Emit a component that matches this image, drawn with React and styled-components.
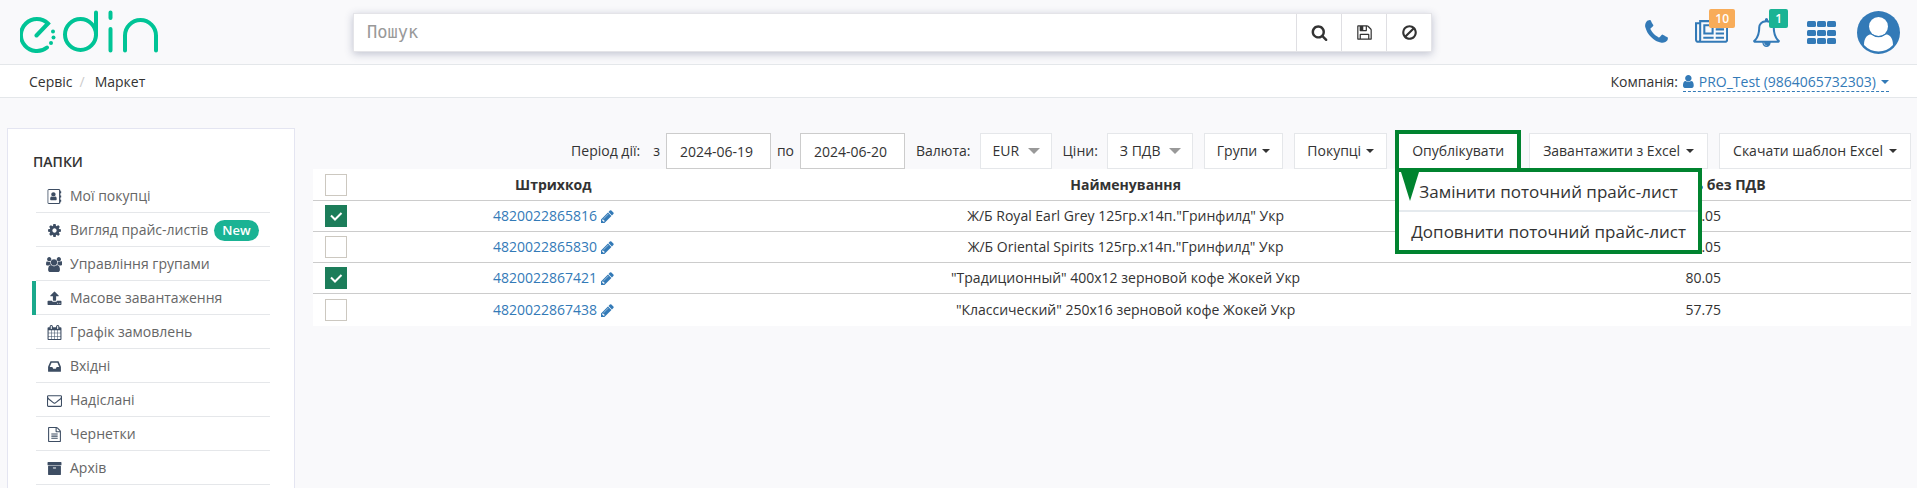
import React from "react";
import styled, { createGlobalStyle, css } from "styled-components";

const GlobalStyle = createGlobalStyle`
  *, *::before, *::after { box-sizing: border-box; }
  html, body, #root { min-height: 100vh; }
  body {
    margin: 0;
    background: #f9f9fb;
    color: #333;
    font: 14px/20px "Open Sans", "Noto Sans", sans-serif;
  }
  button, input, select { font: inherit; color: inherit; }
  a { color: #337ab7; text-decoration: none; }
`;

/* Icon outlines on a 1792-unit em: glyph width, path, left edge. */
const ICONS = {
  search: [1792, "M1216 832q0-185-131.5-316.5t-316.5-131.5-316.5 131.5-131.5 316.5 131.5 316.5 316.5 131.5 316.5-131.5 131.5-316.5zm512 832q0 52-38 90t-90 38q-54 0-90-38l-343-342q-179 124-399 124-143 0-273.5-55.5t-225-150-150-225-55.5-273.5 55.5-273.5 150-225 225-150 273.5-55.5 273.5 55.5 225 150 150 225 55.5 273.5q0 220-124 399l343 343q37 37 37 90z"],
  save: [1792, "M512 1536h768v-384h-768v384zm896 0h128v-896q0-14-10-38.5t-20-34.5l-281-281q-10-10-34-20t-39-10v416q0 40-28 68t-68 28h-576q-40 0-68-28t-28-68v-416h-128v1280h128v-416q0-40 28-68t68-28h832q40 0 68 28t28 68v416zm-384-928v-320q0-13-9.5-22.5t-22.5-9.5h-192q-13 0-22.5 9.5t-9.5 22.5v320q0 13 9.5 22.5t22.5 9.5h192q13 0 22.5-9.5t9.5-22.5zm640 32v928q0 40-28 68t-68 28h-1344q-40 0-68-28t-28-68v-1344q0-40 28-68t68-28h928q40 0 88 20t76 48l280 280q28 28 48 76t20 88z"],
  ban: [1792, "M1440 893q0-161-87-295l-754 753q137 89 297 89 111 0 211.5-43.5t173.5-116.5 116-174.5 43-212.5zm-999 299l755-754q-135-91-300-91-148 0-273 73t-198 199-73 274q0 162 89 299zm1223-299q0 157-61 300t-163.5 246-245 164-298.5 61-298.5-61-245-164-163.5-246-61-300 61-299.5 163.5-245.5 245-164 298.5-61 298.5 61 245 164 163.5 245.5 61 299.5z"],
  phone: [1792, "M1600 1240q0 27-10 70.5t-21 68.5q-21 50-122 106-94 51-186 51-27 0-53-3.5t-57.5-12.5-47-14.5-55.5-20.5-49-18q-98-35-175-83-127-79-264-216t-216-264q-48-77-83-175-3-9-18-49t-20.5-55.5-14.5-47-12.5-57.5-3.5-53q0-92 51-186 56-101 106-122 25-11 68.5-21t70.5-10q14 0 21 3 18 6 53 76 11 19 30 54t35 63.5 31 53.5q3 4 17.5 25t21.5 35.5 7 28.5q0 20-28.5 50t-62 55-62 53-28.5 46q0 9 5 22.5t8.5 20.5 14 24 11.5 19q76 137 174 235t235 174q2 1 19 11.5t24 14 20.5 8.5 22.5 5q18 0 46-28.5t53-62 55-62 50-28.5q14 0 28.5 7t35.5 21.5 25 17.5q25 15 53.5 31t63.5 35 54 30q70 35 76 53 3 7 3 21z"],
  news: [2048, "M1024 512h-384v384h384v-384zm128 640v128h-640v-128h640zm0-768v640h-640v-640h640zm640 768v128h-512v-128h512zm0-256v128h-512v-128h512zm0-256v128h-512v-128h512zm0-256v128h-512v-128h512zm-1536 960v-960h-128v960q0 26 19 45t45 19 45-19 19-45zm1664 0v-1088h-1536v1088q0 33-11 64h1483q26 0 45-19t19-45zm128-1216v1216q0 80-56 136t-136 56h-1664q-80 0-136-56t-56-136v-1088h256v-128h1792z"],
  bell: [1792, "M912 1696q0-16-16-16-59 0-101.5-42.5t-42.5-101.5q0-16-16-16t-16 16q0 73 51.5 124.5t124.5 51.5q16 0 16-16zm-666-288h1300q-266-300-266-832 0-51-24-105t-69-103-121.5-80.5-169.5-31.5-169.5 31.5-121.5 80.5-69 103-24 105q0 532-266 832zm1482 0q0 52-38 90t-90 38h-448q0 106-75 181t-181 75-181-75-75-181h-448q-52 0-90-38t-38-90q50-42 91-88t85-119.5 74.5-158.5 50-206 19.5-260q0-152 117-282.5t307-158.5q-8-19-8-39 0-40 28-68t68-28 68 28 28 68q0 20-8 39 190 28 307 158.5t117 282.5q0 139 19.5 260t50 206 74.5 158.5 85 119.5 91 88z"],
  user: [1280, "M1536 1399q0 109-62.5 187t-150.5 78h-854q-88 0-150.5-78t-62.5-187q0-85 8.5-160.5t31.5-152 58.5-131 94-89 134.5-34.5q131 128 313 128t313-128q76 0 134.5 34.5t94 89 58.5 131 31.5 152 8.5 160.5zm-256-887q0 159-112.5 271.5t-271.5 112.5-271.5-112.5-112.5-271.5 112.5-271.5 271.5-112.5 271.5 112.5 112.5 271.5z", 256],
  addressBook: [1792, "M1028 644q0 107-76.5 183t-183.5 76-183.500-76-76.500-183 76.500-183.500 183.500-76.500 183.500 76.500 76.500 183.500zm-520 700q-60 0-94-38t-34-92q0-52 5-104t22-106 52-86 84-32q100 84 225 84t225-84q49 0 84 32t52 86 22 106 5 104q0 54-34 92t-94 38zM1664 512h-64v256h64q13 0 22.500 9.500t9.500 22.500v192q0 13-9.500 22.500t-22.500 9.500h-64v256h64q13 0 22.500 9.500t9.500 22.500v192q0 13-9.500 22.500t-22.500 9.500h-64v96q0 66-47 113t-113 47h-1216q-66 0-113-47t-47-113v-1472q0-66 47-113t113-47h1216q66 0 113 47t47 113v96h64q13 0 22.500 9.500t9.500 22.500v192q0 13-9.500 22.500t-22.500 9.500zM1440 1632v-1472q0-13-9.500-22.500t-22.500-9.500h-1216q-13 0-22.500 9.500t-9.500 22.500v1472q0 13 9.500 22.500t22.500 9.500h1216q13 0 22.500-9.500t9.500-22.500z"],
  cog: [1792, "M1152 896q0-106-75-181t-181-75-181 75-75 181 75 181 181 75 181-75 75-181zm512-109v222q0 12-8 23t-20 13l-185 28q-19 54-39 91 35 50 107 138 10 12 10 25t-9 23q-27 37-99 108t-94 71q-12 0-26-9l-138-108q-44 23-91 38-16 136-29 186-7 28-36 28h-222q-14 0-24.5-8.5t-11.5-21.5l-28-184q-49-16-90-37l-141 107q-10 9-25 9-14 0-25-11-126-114-165-168-7-10-7-23 0-12 8-23 15-21 51-66.500t54-70.500q-27-50-41-99l-183-27q-13-2-21-12.500t-8-23.500v-222q0-12 8-23t19-13l186-28q14-46 39-92-40-57-107-138-10-12-10-24 0-10 9-23 26-36 98.500-107.500t94.500-71.500q13 0 26 10l138 107q44-23 91-38 16-136 29-186 7-28 36-28h222q14 0 24.500 8.500t11.500 21.500l28 184q49 16 90 37l142-107q9-9 24-9 13 0 25 10 129 119 165 170 7 8 7 22 0 12-8 23-15 21-51 66.500t-54 70.500q26 50 41 98l183 28q13 2 21 12.500t8 23.500z"],
  users: [1920, "M593 896q-162 5-265 128h-134q-82 0-138-40.5t-56-118.5q0-353 124-353 6 0 43.5 21t97.5 42.5 119 21.5q67 0 133-23-5 37-5 66 0 159 93 293zm1071 637q0 120-73 189.500t-194 69.500h-874q-121 0-194-69.500t-73-189.500q0-53 3.500-103.500t14-109 26.500-108.500 43-97.500 62-81 85.500-53.500 111.500-20q10 0 43 21.500t73 48 107 48 135 21.500 135-21.500 107-48 73-48 43-21.500q61 0 111.500 20t85.500 53.500 62 81 43 97.500 26.500 108.500 14 109 3.500 103.500zm-1024-1277q0 106-75 181t-181 75-181-75-75-181 75-181 181-75 181 75 75 181zm704 384q0 159-112.500 271.500t-271.500 112.500-271.500-112.500-112.500-271.500 112.500-271.500 271.500-112.500 271.500 112.500 112.500 271.500zm576 225q0 78-56 118.500t-138 40.500h-134q-103-123-265-128 93-134 93-293 0-29-5-66 66 23 133 23 59 0 119-21.500t97.500-42.500 43.500-21q124 0 124 353zm-128-609q0 106-75 181t-181 75-181-75-75-181 75-181 181-75 181 75 75 181z"],
  upload: [1792, "M1344 1472q0-26-19-45t-45-19-45 19-19 45 19 45 45 19 45-19 19-45zm256 0q0-26-19-45t-45-19-45 19-19 45 19 45 45 19 45-19 19-45zm128-224v320q0 40-28 68t-68 28h-1472q-40 0-68-28t-28-68v-320q0-40 28-68t68-28h427q21 56 70.500 92t110.500 36h256q61 0 110.500-36t70.500-92h427q40 0 68 28t28 68zm-325-648q-17 40-59 40h-256v448q0 26-19 45t-45 19h-256q-26 0-45-19t-19-45v-448h-256q-42 0-59-40-17-39 14-69l448-448q18-19 45-19t45 19l448 448q31 30 14 69z"],
  calendar: [1792, "M192 1664h288v-288h-288v288zm352 0h320v-288h-320v288zm-352-352h288v-320h-288v320zm352 0h320v-320h-320v320zm-352-384h288v-288h-288v288zm736 736h320v-288h-320v288zm-384-736h320v-288h-320v288zm768 736h288v-288h-288v288zm-384-352h320v-320h-320v320zm-352-864v-288q0-13-9.500-22.500t-22.500-9.500h-64q-13 0-22.500 9.500t-9.500 22.500v288q0 13 9.500 22.500t22.500 9.500h64q13 0 22.500-9.500t9.500-22.500zm736 864h288v-320h-288v320zm-384-384h320v-288h-320v288zm384 0h288v-288h-288v288zm32-480v-288q0-13-9.500-22.500t-22.500-9.500h-64q-13 0-22.500 9.500t-9.500 22.500v288q0 13 9.500 22.500t22.500 9.500h64q13 0 22.500-9.500t9.500-22.500zm384-64v1280q0 52-38 90t-90 38h-1408q-52 0-90-38t-38-90v-1280q0-52 38-90t90-38h128v-96q0-66 47-113t113-47h64q66 0 113 47t47 113v96h384v-96q0-66 47-113t113-47h64q66 0 113 47t47 113v96h128q52 0 90 38t38 90z"],
  inbox: [1792, "M1151 960h316q-1-3-2.500-8.500t-2.500-7.500l-212-496h-708l-212 496q-1 3-2.500 8.500t-2.500 7.500h316l95 192h320zm513 30v482q0 26-19 45t-45 19h-1408q-26 0-45-19t-19-45v-482q0-62 25-123l238-552q10-25 36.500-42t52.500-17h832q26 0 52.500 17t36.500 42l238 552q25 61 25 123z"],
  envelope: [1792, "M1664 1504v-768q-32 36-69 66-268 206-426 338-51 43-83 67t-86.500 48.500-102.500 24.500h-2q-48 0-102.500-24.500t-86.500-48.500-83-67q-158-132-426-338-37-30-69-66v768q0 13 9.500 22.500t22.500 9.500h1472q13 0 22.500-9.500t9.500-22.500zm0-1051v-24.500l-.5-13-3-12.500-5.500-9-9-7.500-14-2.500h-1472q-13 0-22.500 9.500t-9.500 22.500q0 168 147 284 193 152 401 317 6 5 35 29.500t46 37.500 44.500 31.500 50.500 27.500 43 9h2q20 0 43-9t50.500-27.500 44.500-31.500 46-37.500 35-29.500q208-165 401-317 54-43 100.500-115.500t46.500-131.500zm128-37v1088q0 66-47 113t-113 47h-1472q-66 0-113-47t-47-113v-1088q0-66 47-113t113-47h1472q66 0 113 47t47 113z"],
  fileText: [1792, "M1596 380q28 28 48 76t20 88v1152q0 40-28 68t-68 28h-1344q-40 0-68-28t-28-68v-1600q0-40 28-68t68-28h896q40 0 88 20t76 48zm-444-244v376h376q-10-29-22-41l-313-313q-12-12-41-22zm384 1528v-1024h-416q-40 0-68-28t-28-68v-416h-768v1536h1280zm-1024-864q0-14 9-23t23-9h704q14 0 23 9t9 23v64q0 14-9 23t-23 9h-704q-14 0-23-9t-9-23v-64zm736 224q14 0 23 9t9 23v64q0 14-9 23t-23 9h-704q-14 0-23-9t-9-23v-64q0-14 9-23t23-9h704zm0 256q14 0 23 9t9 23v64q0 14-9 23t-23 9h-704q-14 0-23-9t-9-23v-64q0-14 9-23t23-9h704z"],
  archive: [1792, "M1088 832q0-26-19-45t-45-19h-256q-26 0-45 19t-19 45 19 45 45 19h256q26 0 45-19t19-45zm576-192v960q0 26-19 45t-45 19h-1408q-26 0-45-19t-19-45v-960q0-26 19-45t45-19h1408q26 0 45 19t19 45zm64-448v256q0 26-19 45t-45 19h-1536q-26 0-45-19t-19-45v-256q0-26 19-45t45-19h1536q26 0 45 19t19 45z"],
  pencil: [1536, "M491 1536l91-91-235-235-91 91v107h128v128h107zm523-928q0-22-22-22-10 0-17 7l-542 542q-7 7-7 17 0 22 22 22 10 0 17-7l542-542q7-7 7-17zm-54-192l416 416-832 832h-416v-416zm683 96q0 53-37 90l-166 166-416-416 166-165q36-38 90-38 53 0 91 38l235 234q37 39 37 91z", 128],
};

const Glyph = styled.svg`
  display: block;
  flex: none;
  height: ${(p) => p.$size}px;
  fill: currentColor;
`;

function Icon({ name, size = 15 }) {
  const [width, d, left = 0] = ICONS[name];
  return (
    <Glyph $size={size} viewBox={`${left} 0 ${width} 1792`} aria-hidden="true">
      <path fillRule="evenodd" d={d} />
    </Glyph>
  );
}

/* ---------- header ---------- */

const Header = styled.header`
  display: flex;
  align-items: center;
  height: 65px;
  border-bottom: 1px solid #e4e7ea;
`;

const Brand = styled.a`
  flex: none;
  width: 353px;
  padding-left: 20px;
`;

const LogoArt = styled.svg`
  display: block;
  width: 139px;
  height: 44px;
  fill: none;
  stroke: #00c496;
  stroke-width: 4;
  stroke-linecap: round;
`;

function Logo() {
  return (
    <LogoArt viewBox="0 0 139 44" role="img" aria-label="edin">
      <path d="M16.500 25.500 28 13.500A16 16 0 1 0 27 37.500" />
      <circle cx="60.500" cy="24.500" r="15.500" />
      <path d="M76 25V2.500M90.500 2.500V8M90.500 19V40.500M105 40.500V25.500a15.500 15.500 0 0 1 31 0V40.500" />
      <g fill="#00c496" stroke="none">
        <circle cx="33" cy="21.500" r="2" />
        <circle cx="33.500" cy="27.500" r="2" />
        <circle cx="31" cy="33" r="2" />
      </g>
    </LogoArt>
  );
}

const SearchBar = styled.form`
  display: flex;
  flex: 1;
  height: 39px;
  background: #fff;
  border: 1px solid #e4e4e8;
  box-shadow: 0 2px 8px rgba(60, 70, 110, 0.3);
`;

const SearchInput = styled.input`
  flex: 1;
  min-width: 0;
  padding: 0 13px;
  border: 0;
  outline: 0;
  background: transparent;
  font: 17px "DejaVu Sans Mono", monospace;
  &::placeholder { color: #999; opacity: 1; }
`;

const SearchButton = styled.button`
  display: grid;
  place-items: center;
  width: 45px;
  padding: 0;
  border: 0;
  border-left: 1px solid #dfdfe3;
  background: #fff;
`;

const HeaderActions = styled.nav`
  display: flex;
  flex: none;
  justify-content: flex-end;
  align-items: center;
  width: 485px;
  padding-right: 17px;
`;

const ActionButton = styled.button`
  position: relative;
  display: grid;
  place-items: center;
  margin: 0 ${(p) => p.$right}px 0 0;
  padding: 0;
  border: 0;
  background: none;
  color: #337ab7;
`;

const Badge = styled.span`
  position: absolute;
  right: -7px;
  top: -9px;
  padding: 0 6px;
  border-radius: 2px;
  background: ${(p) => p.$color};
  color: #fff;
  font-size: 12px;
  font-weight: 600;
  line-height: 19px;
`;

const AppsGrid = styled.svg`
  display: block;
  width: 29px;
  height: 23px;
  fill: currentColor;
`;

const Avatar = styled.svg`
  display: block;
  width: 43px;
  height: 43px;
`;

/* ---------- breadcrumbs ---------- */

const SubHeader = styled.div`
  display: flex;
  justify-content: space-between;
  align-items: center;
  height: 33px;
  padding: 2px 28px 0 29px;
  background: #fff;
  border-bottom: 1px solid #e4e7ea;
`;

const Crumbs = styled.nav`
  display: flex;
  gap: 7px;
  a { color: #333; }
  span { color: #ccc; margin-right: 3px; }
`;

const Company = styled.div`
  display: flex;
  gap: 5px;
`;

const CompanyLink = styled.a`
  display: flex;
  align-items: center;
  gap: 5px;
  height: 20px;
  border-bottom: 1px dashed #337ab7;
`;

const Caret = styled.span`
  display: inline-block;
  flex: none;
  border: ${(p) => p.$size || 4}px solid transparent;
  border-top-color: ${(p) => p.$color || "currentColor"};
  border-bottom: 0;
`;

/* ---------- page body ---------- */

const Body = styled.div`
  display: flex;
  align-items: stretch;
  gap: 18px;
  padding: 30px 6px 0 7px;
`;

const Sidebar = styled.aside`
  flex: none;
  width: 288px;
  min-height: 380px;
  padding: 23px 24px;
  background: #fff;
  border: 1px solid #e4e5f1;
`;

const SidebarTitle = styled.h2`
  margin: 0 0 7px;
  padding-left: 1px;
  font-size: 14px;
  line-height: 20px;
  font-weight: 600;
`;

const FolderList = styled.ul`
  margin: 0;
  padding: 0;
  list-style: none;
`;

const FolderItem = styled.li`
  border-left: 4px solid ${(p) => (p.$active ? "#1aa98c" : "transparent")};
`;

const FolderLink = styled.a`
  display: flex;
  align-items: center;
  height: 34px;
  padding-top: 1px;
  border-bottom: 1px solid #e5e7ea;
  color: #666;
`;

const FolderIcon = styled.span`
  display: grid;
  place-items: center;
  width: 16px;
  margin: 0 8px 0 10px;
  color: #3d4d63;
`;

const NewTag = styled.span`
  margin-left: 6px;
  padding: 0 8px;
  border-radius: 11px;
  background: #1ab394;
  color: #fff;
  font-size: 13px;
  font-weight: 600;
  line-height: 21px;
`;

const Content = styled.main`
  flex: 1;
  min-width: 0;
  padding-top: 5px;
`;

const Toolbar = styled.div`
  display: flex;
  justify-content: flex-end;
  align-items: center;
  gap: 11px;
`;

const Field = styled.div`
  display: flex;
  align-items: center;
  gap: ${(p) => p.$gap}px;
`;

const DateInput = styled.input`
  width: 105px;
  height: 36px;
  padding: 0 13px;
  border: 1px solid #ccc;
  background: #fff;
`;

const SelectBox = styled.span`
  display: grid;
  align-items: center;
  > * { grid-area: 1 / 1; }
  > span { justify-self: end; margin-right: 12px; pointer-events: none; }
`;

const Select = styled.select`
  appearance: none;
  width: ${(p) => p.$width}px;
  height: 36px;
  padding: 0 12px;
  border: 1px solid #e5e7ea;
  border-radius: 0;
  background: #fff;
`;

const ToolButton = styled.button`
  display: flex;
  align-items: center;
  gap: ${(p) => (p.$wide ? 6 : 5)}px;
  height: 36px;
  padding: 0 ${(p) => (p.$wide ? 13 : 12)}px;
  border: 1px solid #e5e7ea;
  background: #fff;
  white-space: nowrap;
  ${(p) => p.$highlight && css`outline: 4px solid #00832f; outline-offset: -1px;`}
`;

const MenuAnchor = styled.div`
  position: relative;
`;

const Menu = styled.div`
  position: absolute;
  z-index: 2;
  left: -3px;
  top: 35px;
  width: 307px;
  border: 4px solid #00832f;
  background: #fff;
`;

const MenuItem = styled.button`
  display: block;
  width: 100%;
  padding: 9px 0 7px;
  border: 0;
  border-top: ${(p) => (p.$divided ? 2 : 0)}px solid #e5eaee;
  background: none;
  font-size: 17px;
  line-height: 22px;
  white-space: nowrap;
`;

const Pointer = styled.svg`
  position: absolute;
  left: 2px;
  top: 0;
  width: 18px;
  height: 29px;
  fill: #00832f;
`;

/* ---------- table ---------- */

const Table = styled.table`
  width: 100%;
  table-layout: fixed;
  border-collapse: separate;
  border-spacing: 0;
  background: #fff;
  th, td {
    height: 31px;
    padding: 0;
    text-align: center;
    border-bottom: 1px solid #ccc;
  }
  th { height: 32px; font-weight: 700; }
  th:first-child, td:first-child { padding-left: 12px; }
  tbody tr:last-child td { height: 32px; border-bottom: 0; }
`;

const Col = styled.col`
  width: ${(p) => p.$width};
`;

const Barcode = styled.a`
  display: inline-flex;
  align-items: center;
  gap: 4px;
`;

const CheckCell = styled.span`
  display: grid;
  width: 22px;
  height: 22px;
  > * { grid-area: 1 / 1; }
`;

const CheckInput = styled.input`
  appearance: none;
  width: 22px;
  height: 22px;
  margin: 0;
  border: 1px solid #ccc8c0;
  background: #fff;
  &:checked { background: #1c7d5a; border-color: #1c7d5a; }
  &:not(:checked) + svg { visibility: hidden; }
`;

const Tick = styled.svg`
  width: 22px;
  height: 22px;
  fill: none;
  stroke: #fff;
  stroke-width: 2;
  pointer-events: none;
`;

function Checkbox({ checked, label }) {
  return (
    <CheckCell>
      <CheckInput type="checkbox" defaultChecked={checked} aria-label={label} />
      <Tick viewBox="0 0 22 22" aria-hidden="true">
        <path d="M6 10.500l4 4 6.500-6.500" />
      </Tick>
    </CheckCell>
  );
}

const FOLDERS = [
  { icon: "addressBook", label: "Мої покупці" },
  { icon: "cog", label: "Вигляд прайс-листів", tag: "New" },
  { icon: "users", label: "Управління групами" },
  { icon: "upload", label: "Масове завантаження", active: true },
  { icon: "calendar", label: "Графік замовлень" },
  { icon: "inbox", label: "Вхідні" },
  { icon: "envelope", label: "Надіслані" },
  { icon: "fileText", label: "Чернетки" },
  { icon: "archive", label: "Архів" },
];

const PRODUCTS = [
  { code: "4820022865816", name: 'Ж/Б Royal Earl Grey 125гр.х14п."Гринфилд" Укр', price: "45.05", checked: true },
  { code: "4820022865830", name: 'Ж/Б Oriental Spirits 125гр.х14п."Гринфилд" Укр', price: "45.05" },
  { code: "4820022867421", name: '"Традиционный" 400х12 зерновой кофе Жокей Укр', price: "80.05", checked: true },
  { code: "4820022867438", name: '"Классический" 250х16 зерновой кофе Жокей Укр', price: "57.75" },
];

export default function App() {
  return (
    <>
      <GlobalStyle />
      <Header>
        <Brand href="#"><Logo /></Brand>
        <SearchBar role="search">
          <SearchInput type="text" placeholder="Пошук" aria-label="Пошук" />
          <SearchButton type="button" aria-label="Шукати"><Icon name="search" size={17} /></SearchButton>
          <SearchButton type="button" aria-label="Зберегти"><Icon name="save" size={17} /></SearchButton>
          <SearchButton type="button" aria-label="Очистити"><Icon name="ban" size={17} /></SearchButton>
        </SearchBar>
        <HeaderActions>
          <ActionButton $right={24} aria-label="Телефон"><Icon name="phone" size={29} /></ActionButton>
          <ActionButton $right={24} aria-label="Новини">
            <Icon name="news" size={29} />
            <Badge $color="#f8ac59">10</Badge>
          </ActionButton>
          <ActionButton $right={26} aria-label="Сповіщення">
            <Icon name="bell" size={29} />
            <Badge $color="#1ab394">1</Badge>
          </ActionButton>
          <ActionButton $right={21} aria-label="Сервіси">
            <AppsGrid viewBox="0 0 29 23">
              {[0, 9, 17].map((y) => [0, 10, 20].map((x) => (
                <rect key={`${x}-${y}`} x={x} y={y} width="9" height="6" rx="1.500" />
              )))}
            </AppsGrid>
          </ActionButton>
          <ActionButton $right={0} aria-label="Профіль">
            <Avatar viewBox="0 0 43 43">
              <circle cx="21.500" cy="21.500" r="21.500" fill="#337ab7" />
              <path d="M7 34C7 26 11 23.500 14 23.500q7.500 5.500 15 0C32 23.500 36 26 36 34q-6 6.500-14.500 6.500T7 34z" fill="#fff" />
              <circle cx="21.500" cy="15.500" r="10.500" fill="#337ab7" />
              <circle cx="21.500" cy="15.500" r="9.500" fill="#fff" />
            </Avatar>
          </ActionButton>
        </HeaderActions>
      </Header>

      <SubHeader>
        <Crumbs>
          <a href="#">Сервіс</a>
          <span>/</span>
          <a href="#">Маркет</a>
        </Crumbs>
        <Company>
          Компанія:
          <CompanyLink href="#">
            <Icon name="user" />
            PRO_Test (9864065732303)
            <Caret />
          </CompanyLink>
        </Company>
      </SubHeader>

      <Body>
        <Sidebar>
          <SidebarTitle>ПАПКИ</SidebarTitle>
          <FolderList>
            {FOLDERS.map((f) => (
              <FolderItem key={f.label} $active={f.active}>
                <FolderLink href="#">
                  <FolderIcon><Icon name={f.icon} /></FolderIcon>
                  {f.label}
                  {f.tag && <NewTag>{f.tag}</NewTag>}
                </FolderLink>
              </FolderItem>
            ))}
          </FolderList>
        </Sidebar>

        <Content>
          <Toolbar>
            <Field $gap={6}>
              <Field $gap={13}>
                <span>Період дії:</span>
                <label htmlFor="date-from">з</label>
              </Field>
              <DateInput id="date-from" type="text" defaultValue="2024-06-19" />
              <label htmlFor="date-to">по</label>
              <DateInput id="date-to" type="text" defaultValue="2024-06-20" />
            </Field>
            <Field $gap={9}>
              <label htmlFor="currency">Валюта:</label>
              <SelectBox>
                <Select id="currency" $width={72}><option>EUR</option></Select>
                <Caret $size={6} $color="#999" />
              </SelectBox>
            </Field>
            <Field $gap={9}>
              <label htmlFor="vat">Ціни:</label>
              <SelectBox>
                <Select id="vat" $width={86}><option>З ПДВ</option></Select>
                <Caret $size={6} $color="#999" />
              </SelectBox>
            </Field>
            <ToolButton type="button">Групи<Caret /></ToolButton>
            <ToolButton type="button">Покупці<Caret /></ToolButton>
            <MenuAnchor>
              <ToolButton type="button" $wide $highlight>Опублікувати</ToolButton>
              <Menu>
                <Pointer viewBox="0 0 18 29" aria-hidden="true"><path d="M0 0H18L9 29z" /></Pointer>
                <MenuItem type="button">Замінити поточний прайс-лист</MenuItem>
                <MenuItem type="button" $divided>Доповнити поточний прайс-лист</MenuItem>
              </Menu>
            </MenuAnchor>
            <ToolButton type="button" $wide>Завантажити з Excel<Caret /></ToolButton>
            <ToolButton type="button" $wide>Скачати шаблон Excel<Caret /></ToolButton>
          </Toolbar>

          <Table>
            <colgroup>
              <Col $width="38px" />
              <Col $width="auto" />
              <Col $width="46.3%" />
              <Col $width="26%" />
            </colgroup>
            <thead>
              <tr>
                <th><Checkbox label="Вибрати все" /></th>
                <th>Штрихкод</th>
                <th>Найменування</th>
                <th>Вартість без ПДВ</th>
              </tr>
            </thead>
            <tbody>
              {PRODUCTS.map((p) => (
                <tr key={p.code}>
                  <td><Checkbox checked={p.checked} label={p.code} /></td>
                  <td><Barcode href="#">{p.code}<Icon name="pencil" /></Barcode></td>
                  <td>{p.name}</td>
                  <td>{p.price}</td>
                </tr>
              ))}
            </tbody>
          </Table>
        </Content>
      </Body>
    </>
  );
}
